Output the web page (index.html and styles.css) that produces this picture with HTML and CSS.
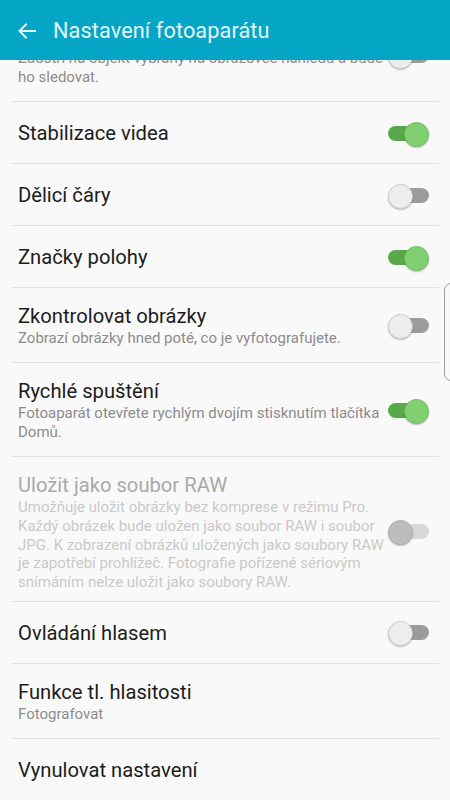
FILE: index.html
```html
<!DOCTYPE html>
<html lang="cs">
<head>
<meta charset="utf-8">
<title>Nastavení fotoaparátu</title>
<link rel="stylesheet" href="styles.css">
</head>
<body>
<div class="screen">
  <header class="appbar">
    <svg class="back" viewBox="0 0 24 24" width="24" height="24" aria-hidden="true">
      <path d="M20 12H5M11 5.5L4.5 12L11 18.5" fill="none" stroke="currentColor" stroke-width="2" stroke-linecap="square"/>
    </svg>
    <h1 class="title">Nastavení fotoaparátu</h1>
  </header>

  <ul class="list">
    <li class="row">
      <div class="text">
        <div class="label-spacer"></div>
        <div class="sub">Zaostří na objekt vybraný na obrazovce náhledu a bude ho sledovat.</div>
      </div>
      <span class="switch"></span>
    </li>
    <li class="row single">
      <div class="text"><div class="label">Stabilizace videa</div></div>
      <span class="switch on"></span>
    </li>
    <li class="row single">
      <div class="text"><div class="label">Dělicí čáry</div></div>
      <span class="switch"></span>
    </li>
    <li class="row single">
      <div class="text"><div class="label">Značky polohy</div></div>
      <span class="switch on"></span>
    </li>
    <li class="row">
      <div class="text">
        <div class="label">Zkontrolovat obrázky</div>
        <div class="sub">Zobrazí obrázky hned poté, co je vyfotografujete.</div>
      </div>
      <span class="switch"></span>
    </li>
    <li class="row">
      <div class="text">
        <div class="label">Rychlé spuštění</div>
        <div class="sub">Fotoaparát otevřete rychlým dvojím stisknutím tlačítka Domů.</div>
      </div>
      <span class="switch on"></span>
    </li>
    <li class="row disabled">
      <div class="text">
        <div class="label">Uložit jako soubor RAW</div>
        <div class="sub">Umožňuje uložit obrázky bez komprese v režimu Pro. Každý obrázek bude uložen jako soubor RAW i soubor JPG. K zobrazení obrázků uložených jako soubory RAW je zapotřebí prohlížeč. Fotografie pořízené sériovým snímáním nelze uložit jako soubory RAW.</div>
      </div>
      <span class="switch"></span>
    </li>
    <li class="row single">
      <div class="text"><div class="label">Ovládání hlasem</div></div>
      <span class="switch"></span>
    </li>
    <li class="row">
      <div class="text">
        <div class="label">Funkce tl. hlasitosti</div>
        <div class="sub">Fotografovat</div>
      </div>
    </li>
    <li class="row single last">
      <div class="text"><div class="label">Vynulovat nastavení</div></div>
    </li>
  </ul>

  <div class="edge-handle"></div>
</div>
</body>
</html>
```

FILE: styles.css
```css
* { box-sizing: border-box; }

html, body {
  margin: 0;
  padding: 0;
  background: #f9f9f9;
}

body {
  font-family: Roboto, "Noto Sans", "Liberation Sans", sans-serif;
  color: #1c1c1c;
}

.screen {
  position: relative;
  width: 450px;
  height: 800px;
  overflow: hidden;
  background: #f9f9f9;
}

.appbar {
  position: absolute;
  top: 0;
  left: 0;
  right: 0;
  height: 60px;
  z-index: 2;
  display: flex;
  align-items: center;
  background: #04a5c5;
  color: #e4f7fb;
  padding-left: 15px;
}

.back {
  flex: none;
  width: 24px;
  height: 24px;
  margin-top: 2px;
}

.title {
  margin: 2px 0 0 14px;
  font-size: 21.7px;
  font-weight: 400;
  line-height: 26px;
  color: #e4f7fb;
  letter-spacing: 0.1px;
}

.list {
  list-style: none;
  margin: 0;
  padding: 8px 0 0 0;
}

.row {
  display: flex;
  align-items: center;
  margin: 0 11px 0 12px;
  padding: 15px 10px 14px 6px;
  border-bottom: 1px solid #e2e2e2;
}

.row.single {
  padding-top: 18px;
  padding-bottom: 17px;
}

.row.last {
  border-bottom: none;
}

.text {
  flex: 1;
  min-width: 0;
  padding-right: 2px;
}

.label {
  font-size: 20.2px;
  line-height: 26px;
  color: #1c1c1c;
}

.label-spacer {
  height: 26px;
}

.sub {
  font-size: 15px;
  line-height: 19px;
  color: #8c8c8c;
}

.disabled {
  padding-bottom: 9px;
}

.disabled .label {
  color: #a9a9a9;
}

.disabled .sub {
  color: #c9c9c9;
  line-height: 18.8px;
}

/* switches */
.switch {
  position: relative;
  flex: none;
  width: 41px;
  height: 23px;
}

.switch::before {
  content: "";
  position: absolute;
  left: 5px;
  right: 0;
  top: 4px;
  height: 15px;
  border-radius: 8px;
  background: #9c9c9c;
}

.switch::after {
  content: "";
  position: absolute;
  left: 0;
  top: 0;
  width: 23px;
  height: 23px;
  border-radius: 50%;
  background: #ededed;
  border: 1px solid #cdcdcd;
  box-shadow: 0 1px 1.5px rgba(0, 0, 0, 0.25);
}

.switch.on::before {
  left: 0;
  right: 5px;
  background: #58a94a;
}

.switch.on::after {
  left: auto;
  right: 0;
  background: #80cf70;
  border-color: #74c164;
}

.disabled .switch::before {
  background: #d7d7d7;
}

.disabled .switch::after {
  background: #bdbdbd;
  border-color: #b0b0b0;
}

.edge-handle {
  position: absolute;
  left: 444px;
  top: 283px;
  width: 20px;
  height: 98px;
  border: 1.5px solid #9a9a9a;
  border-radius: 7px;
  z-index: 1;
}
```
